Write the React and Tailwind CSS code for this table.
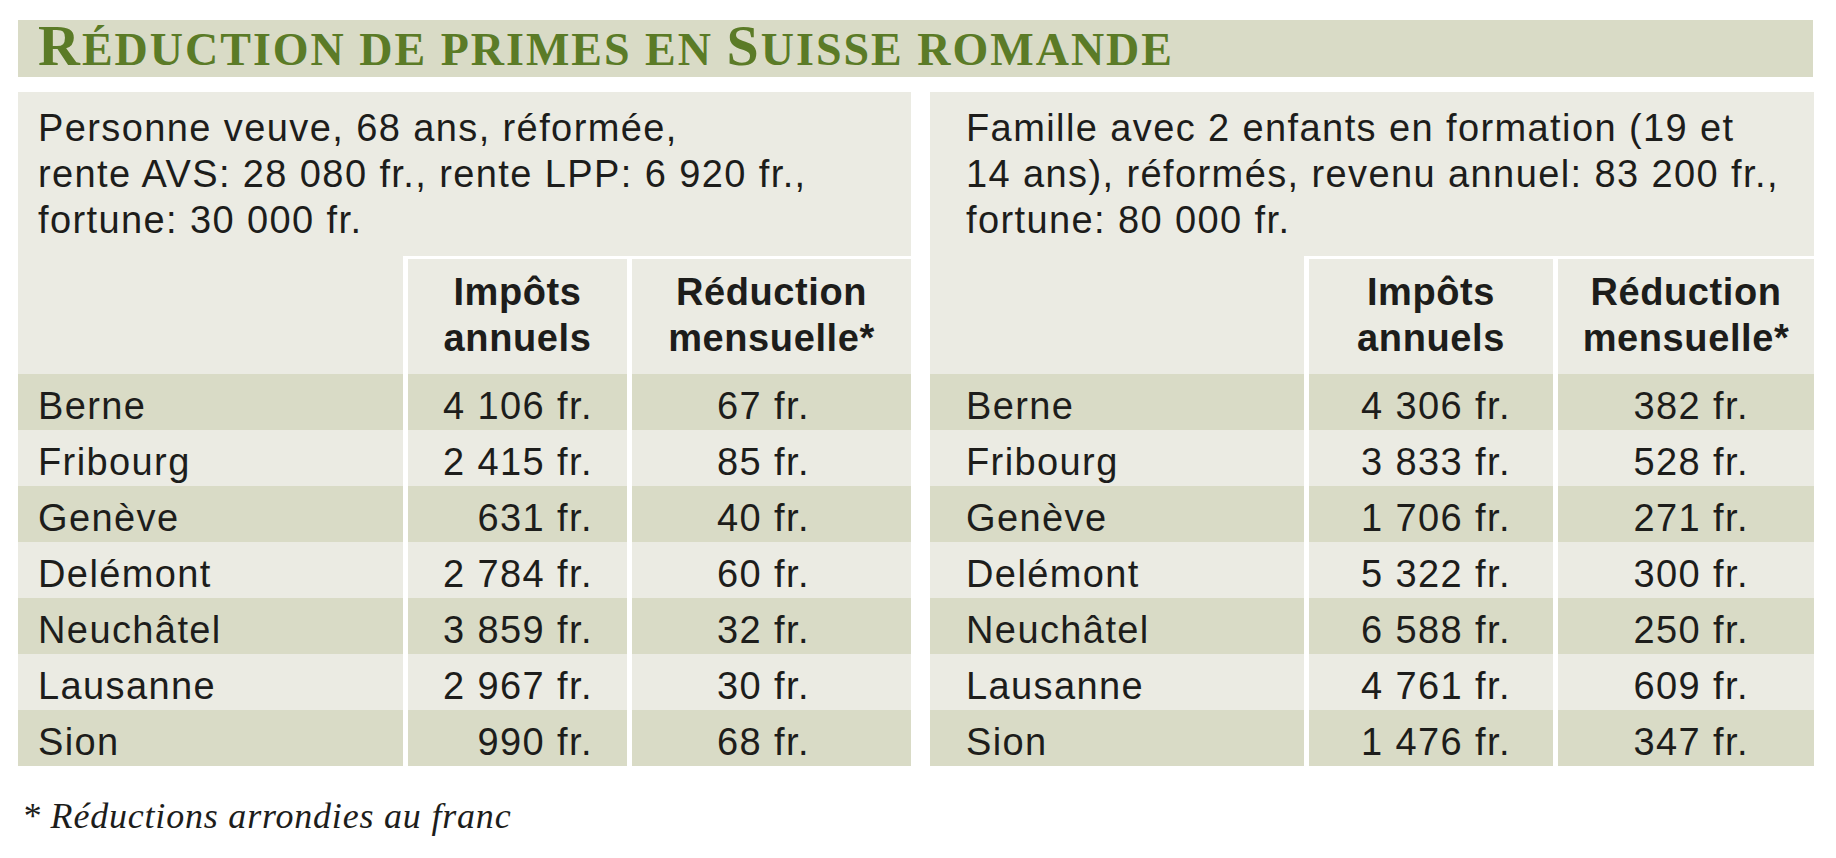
import React from "react";

const villes = ["Berne", "Fribourg", "Genève", "Delémont", "Neuchâtel", "Lausanne", "Sion"];

const veuve = {
  desc: ["Personne veuve, 68 ans, réformée,", "rente AVS: 28 080 fr., rente LPP: 6 920 fr.,", "fortune: 30 000 fr."],
  impots: ["4 106", "2 415", "631", "2 784", "3 859", "2 967", "990"],
  reduc: ["67", "85", "40", "60", "32", "30", "68"],
};

const famille = {
  desc: ["Famille avec 2 enfants en formation (19 et", "14 ans), réformés, revenu annuel: 83 200 fr.,", "fortune: 80 000 fr."],
  impots: ["4 306", "3 833", "1 706", "5 322", "6 588", "4 761", "1 476"],
  reduc: ["382", "528", "271", "300", "250", "609", "347"],
};

const Panel = ({ data, width, cols, padL, padImpots, padReduc }) => {
  return (
    <div className={`${width} bg-[#ebebe3]`}>
      {/* Description */}
      <div className={`h-[164px] pt-[13px] ${padL} text-[38px] leading-[46px] tracking-[1.4px] whitespace-nowrap`}>
        {data.desc.map((l) => (
          <div key={l}>{l}</div>
        ))}
      </div>

      {/* Table */}
      <div className={`grid ${cols}`}>
        <div />
        <div className="border-t-[3px] border-l-[5px] border-white pt-[10px] pb-[13px] text-center font-bold text-[38px] leading-[46px] tracking-[0.6px]">
          Impôts
          <br />
          annuels
        </div>
        <div className="border-t-[3px] border-l-[5px] border-white pt-[10px] pb-[13px] text-center font-bold text-[38px] leading-[46px] tracking-[0.6px]">
          Réduction
          <br />
          mensuelle*
        </div>

        {villes.map((v, i) => {
          const bg = i % 2 === 0 ? "bg-[#d9dbc6]" : "bg-[#ebebe3]";
          return (
            <React.Fragment key={v}>
              <div className={`${bg} h-[56px] pt-[8px] leading-[48px] ${padL}`}>{v}</div>
              <div className={`${bg} h-[56px] pt-[8px] leading-[48px] border-l-[5px] border-white text-right ${padImpots}`}>
                {data.impots[i]} fr.
              </div>
              <div className={`${bg} h-[56px] pt-[8px] leading-[48px] border-l-[5px] border-white text-right ${padReduc}`}>
                {data.reduc[i]} fr.
              </div>
            </React.Fragment>
          );
        })}
      </div>
    </div>
  );
};

const App = () => {
  return (
    <div className="w-[1836px] h-[858px] bg-white pt-[20px] pl-[18px] text-[#1d1d1b] font-['Liberation_Sans',Arial,sans-serif]">
      {/* Title */}
      <div className="w-[1795px] h-[57px] bg-[#d9dbc6] pl-[20px] pt-[3px] leading-[46px] font-['Liberation_Serif',serif] font-bold text-[#5b7b27] tracking-[2px] whitespace-nowrap">
        <span className="text-[58px]">R</span>
        <span className="text-[46px]">ÉDUCTION DE PRIMES EN </span>
        <span className="text-[58px]">S</span>
        <span className="text-[46px]">UISSE ROMANDE</span>
      </div>

      {/* Panels */}
      <div className="mt-[15px] flex gap-[19px] text-[38px] tracking-[1.4px] whitespace-nowrap">
        <Panel
          data={veuve}
          width="w-[893px]"
          cols="grid-cols-[385px_224px_284px]"
          padL="pl-[20px]"
          padImpots="pr-[34px]"
          padReduc="pr-[101px]"
        />
        <Panel
          data={famille}
          width="w-[884px]"
          cols="grid-cols-[374px_249px_261px]"
          padL="pl-[36px]"
          padImpots="pr-[42px]"
          padReduc="pr-[65px]"
        />
      </div>

      {/* Footnote */}
      <div className="mt-[30px] pl-[4px] text-[36px] leading-[40px] tracking-[0.8px] italic font-['Liberation_Serif',serif]">
        * Réductions arrondies au franc
      </div>
    </div>
  );
};

export default App;
